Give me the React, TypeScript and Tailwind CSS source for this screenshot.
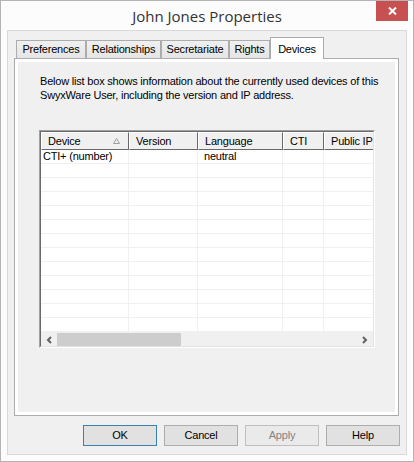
import React from 'react';

const tabs = [
  { name: 'Preferences', width: 70 },
  { name: 'Relationships', width: 75 },
  { name: 'Secretariate', width: 68 },
  { name: 'Rights', width: 41 },
];

const columns = [
  { name: 'Device', width: 88, sort: true },
  { name: 'Version', width: 69 },
  { name: 'Language', width: 85 },
  { name: 'CTI', width: 41 },
  { name: 'Public IP', width: 60 },
];

const rows = [['CTI+ (number)', '', 'neutral', '', '']];

function Button({ label, primary, disabled }: { label: string; primary?: boolean; disabled?: boolean }) {
  let cls = 'border-[#adadad] bg-[#e1e1e1] text-black';
  if (primary) cls = 'border-[#3c7fb1] bg-[#e1e1e1] text-black';
  if (disabled) cls = 'border-[#bfbfbf] bg-[#eaeaea] text-[#838383]';
  return (
    <div className={`w-[74px] h-[21px] border flex items-center justify-center text-[11px] ${cls}`}>
      {label}
    </div>
  );
}

export default function App() {
  return (
    <div
      className="w-[414px] h-[462px] bg-[#fcfcfc] border border-[#b4b4b4] flex flex-col relative"
      style={{ fontFamily: '"Liberation Sans", Arial, sans-serif' }}
    >
      {/* title bar */}
      <div className="h-[29px] flex items-center justify-center text-[15px] text-[#333333] pt-[1px]" style={{ fontFamily: '"Open Sans", "Noto Sans", sans-serif' }}>
        John Jones Properties
      </div>
      <div className="absolute top-0 right-[5px] w-[32px] h-[20px] bg-[#c75050] flex items-center justify-center">
        <svg width="9" height="8" viewBox="0 0 9 8">
          <path d="M1 0.5 L8 7.5 M8 0.5 L1 7.5" stroke="white" strokeWidth="2" />
        </svg>
      </div>

      {/* client area */}
      <div className="mx-[6px] h-[425px] border border-[#d9d9d9] bg-[#f0f0f0] flex flex-col text-[11px] tracking-[-0.2px] text-black">
        <div className="flex items-end h-[21px] mt-[6px] ml-[8px] relative z-10">
          {tabs.map((t) => (
            <div
              key={t.name}
              className="h-[18px] border border-b-0 border-[#acacac] bg-gradient-to-b from-[#f0f0f0] to-[#e5e5e5] flex items-center justify-center"
              style={{ width: t.width }}
            >
              {t.name}
            </div>
          ))}
          <div className="h-[22px] w-[54px] -mb-px border border-b-0 border-[#acacac] bg-white flex justify-center pt-[3px]">
            Devices
          </div>
        </div>

        {/* tab page */}
        <div className="ml-[6px] w-[385px] h-[358px] border border-[#acacac] bg-white p-[3px]">
          <div className="w-full h-full bg-[#f0f0f0] flex flex-col">
            <div className="ml-[22px] mt-[12px] leading-[14px]">
              <div>Below list box shows information about the currently used devices of this</div>
              <div>SwyxWare User, including the version and IP address.</div>
            </div>

            {/* list view */}
            <div className="ml-[21px] mt-[28px] w-[336px] h-[218px] border border-t-[#a0a0a0] border-l-[#a0a0a0] border-r-white border-b-white">
              <div className="w-full h-full border border-t-[#696969] border-l-[#696969] border-r-[#e3e3e3] border-b-[#e3e3e3] bg-white flex flex-col overflow-hidden">
                <div className="flex h-[18px] shrink-0">
                  {columns.map((c) => (
                    <div
                      key={c.name}
                      className="h-full shrink-0 bg-[#f0f0f0] border border-t-white border-l-white border-r-[#696969] border-b-[#696969] flex items-center px-[6px] relative"
                      style={{ width: c.width }}
                    >
                      <span className="whitespace-nowrap">{c.name}</span>
                      {c.sort && (
                        <svg className="absolute right-[8px] top-[5px]" width="7" height="6" viewBox="0 0 7 6">
                          <path d="M0.5 5.5 L3.5 0.5 L6.5 5.5 Z" fill="none" stroke="#a0a0a0" strokeWidth="1" />
                        </svg>
                      )}
                    </div>
                  ))}
                </div>
                <div className="flex-1 flex flex-col">
                  {Array.from({ length: 13 }).map((_, i) => (
                    <div key={i} className="flex h-[14px] shrink-0 border-b border-[#f0f0f0]">
                      {columns.map((c, j) => (
                        <div
                          key={c.name}
                          className={`h-full shrink-0 border-r border-[#f0f0f0] leading-[13px] whitespace-nowrap ${j === 0 ? 'px-[2px]' : 'px-[6px]'}`}
                          style={{ width: c.width }}
                        >
                          {rows[i] ? rows[i][j] : ''}
                        </div>
                      ))}
                    </div>
                  ))}
                </div>
                {/* horizontal scrollbar */}
                <div className="h-[16px] shrink-0 bg-[#f0f0f0] flex items-center">
                  <div className="w-[16px] h-full flex items-center justify-center">
                    <svg width="7" height="8" viewBox="0 0 7 8">
                      <path d="M5 1 L2 4 L5 7" fill="none" stroke="#606060" strokeWidth="2" />
                    </svg>
                  </div>
                  <div className="w-[124px] h-[14px] bg-[#cdcdcd]" />
                  <div className="flex-1" />
                  <div className="w-[18px] h-full flex items-center justify-center">
                    <svg width="7" height="8" viewBox="0 0 7 8">
                      <path d="M2 1 L5 4 L2 7" fill="none" stroke="#606060" strokeWidth="2" />
                    </svg>
                  </div>
                </div>
              </div>
            </div>
          </div>
        </div>

        {/* buttons */}
        <div className="flex justify-end gap-[7px] mt-[9px] mr-[6px]">
          <Button label="OK" primary />
          <Button label="Cancel" />
          <Button label="Apply" disabled />
          <Button label="Help" />
        </div>
      </div>
    </div>
  );
}
